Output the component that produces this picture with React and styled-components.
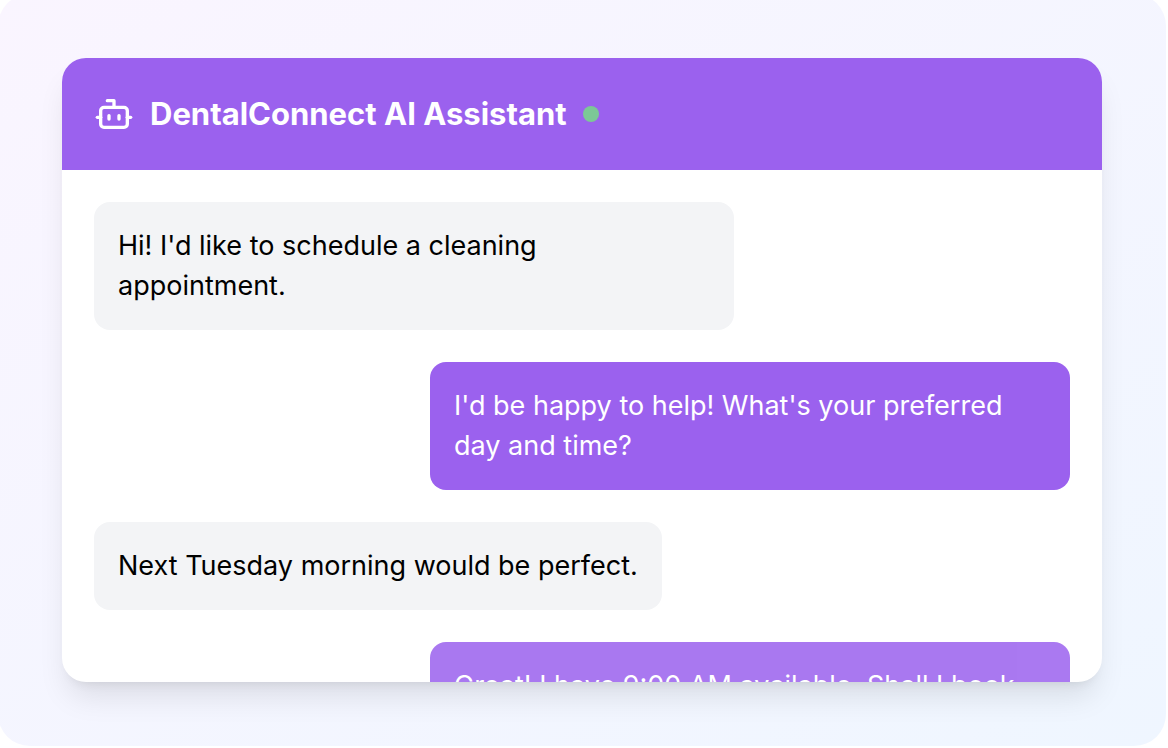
import React from "react";
import styled, { createGlobalStyle } from "styled-components";
import { Bot } from "lucide-react";

const GlobalStyle = createGlobalStyle`
  * {
    box-sizing: border-box;
  }

  body {
    margin: 0;
    background-color: #fff;
    color: #000;
    font-family: Inter, "Liberation Sans", sans-serif;
  }
`;

const Stage = styled.main`
  margin: -6px 2px 0 -2px;
  padding: 64px;
  border-radius: 32px;
  background-image: linear-gradient(to bottom right, #faf5ff, #eff6ff);
`;

const ChatCard = styled.section`
  overflow: hidden;
  border-radius: 24px;
  background-color: #fff;
  box-shadow: 0 20px 30px -6px rgba(0, 0, 0, 0.1), 0 8px 12px -8px rgba(0, 0, 0, 0.1);
`;

const ChatHeader = styled.header`
  display: flex;
  align-items: center;
  gap: 16px;
  padding: 32px;
  background-color: #9b61ee;
  color: #fff;
`;

const Title = styled.h1`
  margin: 0;
  font-size: 31px;
  font-weight: 700;
  line-height: 48px;
`;

const OnlineDot = styled.span`
  width: 16px;
  height: 16px;
  border-radius: 50%;
  background-color: #7cc896;
`;

const Messages = styled.ul`
  display: flex;
  flex-direction: column;
  align-items: flex-start;
  gap: 32px;
  height: 512px;
  margin: 0;
  padding: 32px;
  overflow: hidden;
  list-style: none;
`;

const Message = styled.li`
  flex-shrink: 0;
  align-self: ${(props) => (props.$assistant ? "flex-end" : "flex-start")};
  width: ${(props) => (props.$assistant ? "100%" : "auto")};
  max-width: 640px;
  padding: 24px;
  border-radius: 16px;
  background-color: ${(props) => (props.$assistant ? "#9b61ee" : "#f3f4f6")};
  color: ${(props) => (props.$assistant ? "#fff" : "#000")};
  font-size: 27px;
  line-height: 40px;
  opacity: ${(props) => (props.$entering ? 0.85 : 1)};
`;

const messages = [
  { id: 1, text: "Hi! I'd like to schedule a cleaning appointment." },
  { id: 2, assistant: true, text: "I'd be happy to help! What's your preferred day and time?" },
  { id: 3, text: "Next Tuesday morning would be perfect." },
  { id: 4, assistant: true, entering: true, text: "Great! I have 9:00 AM available. Shall I book" },
];

function App() {
  return (
    <>
      <GlobalStyle />
      <Stage>
        <ChatCard>
          <ChatHeader>
            <Bot size={40} aria-hidden="true" />
            <Title>DentalConnect AI Assistant</Title>
            <OnlineDot />
          </ChatHeader>
          <Messages>
            {messages.map((message) => (
              <Message
                key={message.id}
                $assistant={message.assistant}
                $entering={message.entering}
              >
                {message.text}
              </Message>
            ))}
          </Messages>
        </ChatCard>
      </Stage>
    </>
  );
}

export default App;
